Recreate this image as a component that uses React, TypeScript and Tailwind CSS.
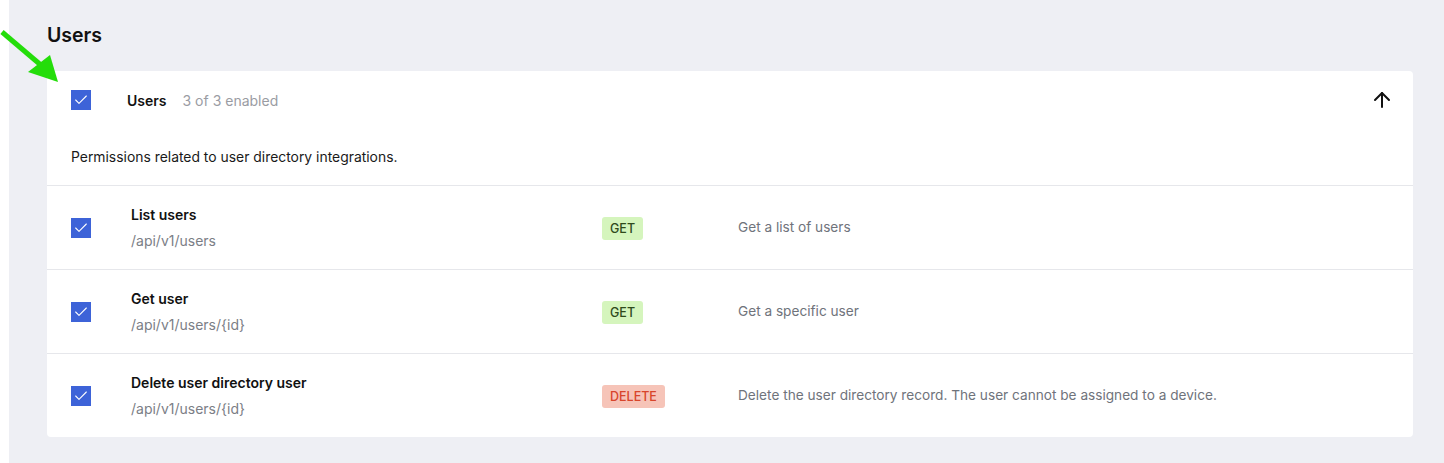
import { ArrowUp, Check } from "lucide-react";

type Perm = {
  id: string;
  title: string;
  path: string;
  method: "GET" | "DELETE";
  description: string;
};

const PERMS: Perm[] = [
  { id: "list", title: "List users", path: "/api/v1/users", method: "GET", description: "Get a list of users" },
  { id: "get", title: "Get user", path: "/api/v1/users/{id}", method: "GET", description: "Get a specific user" },
  {
    id: "delete",
    title: "Delete user directory user",
    path: "/api/v1/users/{id}",
    method: "DELETE",
    description: "Delete the user directory record. The user cannot be assigned to a device.",
  },
];

const METHOD_CLS: Record<string, string> = {
  GET: "bg-[#d5f5bd] text-[#2f4a1c]",
  DELETE: "bg-[#f6c4b8] text-[#d8452b]",
};

function Box() {
  return (
    <span className="flex h-5 w-5 items-center justify-center bg-[#3d63d8]">
      <Check className="h-4 w-4 text-white" strokeWidth={1.6} />
    </span>
  );
}

export default function App() {
  return (
    <div className="relative h-[463px] bg-white pl-[9px] font-['Inter',sans-serif]">
      {/* annotation arrow */}
      <svg className="absolute left-0 top-0" width="70" height="90" viewBox="0 0 70 90">
        <line x1="2" y1="32" x2="42" y2="66" stroke="#24dd0a" strokeWidth="5" />
        <polygon points="58,82 28,72 50,55" fill="#24dd0a" />
      </svg>

      <div className="h-full bg-[#eeeff4] pl-[38px] pr-[31px] pt-[23px]">
        <h2 className="text-[19.5px] font-semibold leading-6 text-[#111]">Users</h2>

        <div className="mt-[24px] rounded-[4px] bg-white">
          <div className="flex h-[56px] items-center pl-6 pr-[19px] pt-[2px]">
            <Box />
            <span className="ml-9 text-[14px] font-semibold text-[#111]">Users</span>
            <span className="ml-4 text-[14px] text-[#9a9ca3]">3 of 3 enabled</span>
            <ArrowUp className="ml-auto h-6 w-6 text-[#111]" strokeWidth={2} />
          </div>

          <p className="pl-6 pb-[20px] pt-[22px] text-[13.9px] leading-4 text-[#1a1a1a]">
            Permissions related to user directory integrations.
          </p>

          {PERMS.map((p) => (
            <div
              key={p.id}
              className="grid h-[84px] grid-cols-[60px_471px_136px_1fr] items-center border-t border-[#e6e7eb] pl-6"
            >
              <Box />
              <div className="flex flex-col gap-2 pt-[1px]">
                <span className="text-[14px] font-semibold leading-[18px] text-[#111]">{p.title}</span>
                <span className="text-[14px] leading-[18px] text-[#7b7e86]">{p.path}</span>
              </div>
              <div>
                <span
                  className={`inline-block rounded-[3px] px-2 py-[4px] text-[12.5px] font-medium leading-[15px] ${METHOD_CLS[p.method]}`}
                >
                  {p.method}
                </span>
              </div>
              <span className="text-[13.65px] text-[#6f737b]">{p.description}</span>
            </div>
          ))}
        </div>
      </div>
    </div>
  );
}
